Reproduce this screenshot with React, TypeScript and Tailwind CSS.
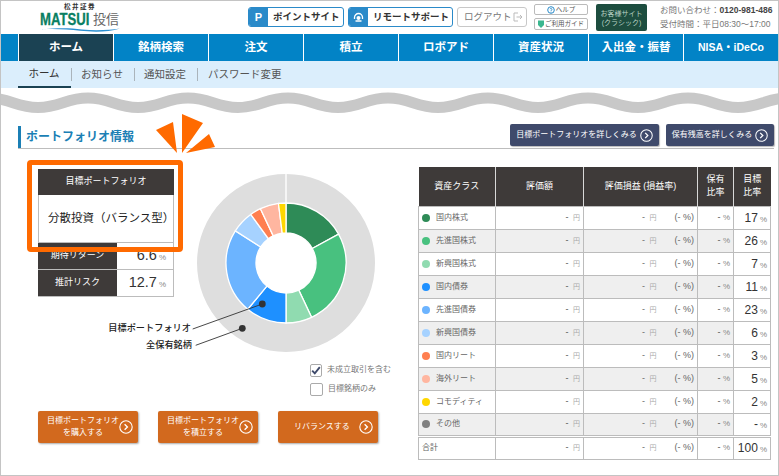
import React from "react";

const GoIcon = ({ size = 14 }: { size?: number }) => (
  <svg width={size} height={size} viewBox="0 0 14 14" className="shrink-0" fill="none" stroke="#fff">
    <circle cx="7" cy="7" r="6.2" strokeWidth="1.1" />
    <path d="M5.6 4.2 8.4 7 5.6 9.8" strokeWidth="1.4" />
  </svg>
);

const navItems = ["ホーム", "銘柄検索", "注文", "積立", "ロボアド", "資産状況", "入出金・振替", "NISA・iDeCo"];
const subItems = ["ホーム", "お知らせ", "通知設定", "パスワード変更"];

const rows = [
  ["国内株式", "#2e8b57", "17"],
  ["先進国株式", "#48c17f", "26"],
  ["新興国株式", "#90dbb0", "7"],
  ["国内債券", "#1e90ff", "11"],
  ["先進国債券", "#6cb4ff", "23"],
  ["新興国債券", "#a6d2ff", "6"],
  ["国内リート", "#ff7f50", "3"],
  ["海外リート", "#ffb6a0", "5"],
  ["コモディティ", "#ffd700", "2"],
  ["その他", "#808080", "-"],
];

const pt = (r: number, pct: number) => {
  const a = (pct / 100) * 2 * Math.PI;
  return [90 + r * Math.sin(a), 90 - r * Math.cos(a)];
};

const arc = (from: number, to: number, r1: number, r0: number) => {
  const large = to - from > 50 ? 1 : 0;
  const [a, b] = pt(r1, from);
  const [c, d] = pt(r1, to);
  const [e, f] = pt(r0, to);
  const [g, h] = pt(r0, from);
  return `M${a} ${b}A${r1} ${r1} 0 ${large} 1 ${c} ${d}L${e} ${f}A${r0} ${r0} 0 ${large} 0 ${g} ${h}Z`;
};

const wavePath = () => {
  const crest = 10;
  const trough = 19.5;
  let d = `M-13 ${crest}`;
  for (let x = -13, up = true; x < 790; x += 50, up = !up) {
    const from = up ? crest : trough;
    const to = up ? trough : crest;
    d += `C${x + 22} ${from} ${x + 28} ${to} ${x + 50} ${to}`;
  }
  return d;
};

const Chart = () => {
  let at = 0;
  const segs = rows
    .filter((r) => r[2] !== "-")
    .map((r) => {
      const from = at;
      at += Number(r[2]);
      return <path key={r[0]} d={arc(from, at, 60, 30)} fill={r[1]} stroke="#fff" strokeWidth="1.3" />;
    });
  return (
    <svg width="180" height="180" viewBox="0 0 180 180" className="overflow-visible">
      <circle cx="90" cy="90" r="74.5" fill="none" stroke="#dedede" strokeWidth="29" />
      <path d="M90 0V31" stroke="#fff" strokeWidth="1.4" />
      {segs}
      <path d="M66.3 131-3.3 156M46.3 155.3-.3 172.3" stroke="#333" strokeWidth="0.9" />
      <circle cx="66.3" cy="131" r="3.4" fill="#333" />
      <circle cx="46.3" cy="155.3" r="3.4" fill="#333" />
    </svg>
  );
};

const Yen = () => <span className="text-[7px] text-[#aaa] ml-[2px]">円</span>;
const Pct = () => <span className="text-[8px] text-[#888] ml-[2px]">%</span>;

const Values = ({ target }: { target: string }) => (
  <>
    <td className="border border-[#bcbcbc] text-right pr-[3px] text-[9px] text-[#555]">
      - <Yen />
    </td>
    <td className="border border-[#bcbcbc] text-[9px] text-[#666]">
      <div className="flex justify-between pl-[58px] pr-[3px]">
        <span>
          - <Yen />
        </span>
        <span>(- %)</span>
      </div>
    </td>
    <td className="border border-[#bcbcbc] text-right pr-[3px] text-[9px] text-[#555]">
      - <span className="text-[8px] text-[#888]">%</span>
    </td>
    <td className="border border-[#bcbcbc] text-right pr-[3px] text-[12px] text-[#333] bg-white">
      {target}
      <Pct />
    </td>
  </>
);

const Check = ({ on, label }: { on?: boolean; label: string }) => (
  <div className="flex items-center h-[14px]">
    <span className="w-[13px] h-[13px] border border-[#aaa] rounded-[2px] bg-white flex items-center justify-center">
      {on && (
        <svg width="10" height="9" viewBox="0 0 10 9" fill="none">
          <path d="M1.2 4.6 3.8 7.4 8.8 1.2" stroke="#3f4a6b" strokeWidth="1.9" />
        </svg>
      )}
    </span>
    <span className="ml-[5px] text-[8px] text-[#777]">{label}</span>
  </div>
);

export default function App() {
  return (
    <div className="w-[779px] h-[476px] box-border border border-[#c4c4c4] bg-white overflow-hidden font-['Liberation_Sans','Noto_Sans_CJK_JP',sans-serif] text-[#333]">
      {/* header */}
      <header className="h-[33px] flex">
        <div className="w-[247px] pl-[39px] pt-[2px] shrink-0">
          <div className="w-[80px] relative">
            <div className="text-[6.5px] font-bold leading-[8px] text-center tracking-[1.5px] text-[#333]">松井証券</div>
            <div className="flex items-center h-[15px] mt-[1px]">
              <span className="text-[16px] font-bold leading-[15px] text-[#0a7f62] w-[53px] origin-left scale-x-[.82] inline-block [-webkit-text-stroke:0.3px_#0a7f62]">MATSUI</span>
              <span className="text-[13px] leading-[15px] text-[#666]">投信</span>
            </div>
            <svg width="80" height="5" viewBox="0 0 80 5" className="block">
              <path d="M0 2.5C20 .5 30 1 42 2.5 56 4 70 3 80 1.5 68 5.5 52 5 40 3.8 28 2.5 14 1.5 0 2.5Z" fill="#2b8fd0" />
            </svg>
          </div>
        </div>
        <div className="flex gap-[4px] pt-[6px] h-[26px] shrink-0">
          <div className="w-[96px] h-[20px] rounded-[3px] border border-[#2a8ac9] flex items-center overflow-hidden">
            <span className="w-[19px] h-full bg-[#2a8ac9] text-white font-bold text-[11px] flex items-center justify-center">P</span>
            <span className="ml-[5px] text-[9.5px] font-bold">ポイントサイト</span>
          </div>
          <div className="w-[105px] h-[20px] rounded-[3px] border border-[#2a8ac9] flex items-center overflow-hidden">
            <span className="w-[19px] h-full bg-[#2a8ac9] flex items-center justify-center">
              <svg width="11" height="11" viewBox="0 0 11 11" fill="none" stroke="#fff" strokeWidth="1.3">
                <path d="M1.5 7V5.5a4 4 0 0 1 8 0V7" />
                <circle cx="5.5" cy="6" r="2" fill="#fff" stroke="none" />
                <path d="M2.5 9h6" />
              </svg>
            </span>
            <span className="ml-[5px] text-[9.5px] font-bold">リモートサポート</span>
          </div>
          <div className="w-[70px] h-[20px] rounded-[3px] border border-[#c8c8c8] flex items-center pl-[6px] text-[9.5px] text-[#777]">
            ログアウト
            <svg width="10" height="10" viewBox="0 0 10 10" className="ml-[1px]" fill="none" stroke="#bbb">
              <path d="M5 1H1v8h4M3.5 5H9M7 3l2 2-2 2" />
            </svg>
          </div>
        </div>
        <div className="ml-[7px] pt-[3px] flex flex-col gap-[3px] w-[54px] shrink-0">
          <div className="h-[11px] border border-[#bbb] rounded-[2px] flex items-center justify-center text-[6.5px] text-[#555]">
            <svg width="8" height="8" viewBox="0 0 8 8" className="mr-[1px]" fill="none" stroke="#2a8ac9">
              <circle cx="4" cy="4" r="3.3" />
              <path d="M3 3.2a1 1 0 1 1 1 1.2v.8M4 5.8v.8" strokeWidth=".8" />
            </svg>
            ヘルプ
          </div>
          <div className="h-[12px] border border-[#bbb] rounded-[2px] flex items-center justify-center text-[6.5px] text-[#555]">
            <svg width="6" height="8" viewBox="0 0 6 8" className="mr-[1px]">
              <path d="M0 .5h6v4.5L3 8 0 5Z" fill="#3bb78f" />
            </svg>
            ご利用ガイド
          </div>
        </div>
        <div className="ml-[8px] mt-[3px] w-[51px] h-[27px] rounded-[2px] bg-[#1d4d3f] text-[#b9d3c6] text-[7px] leading-[9px] flex flex-col items-center justify-center shrink-0">
          <span>お客様サイト</span>
          <span>(クラシック)</span>
        </div>
        <div className="ml-[13px] pt-[2px] text-[8.5px] leading-[14px] text-[#777] whitespace-nowrap">
          <div>
            お問い合わせ：<span className="font-bold text-[#444]">0120-981-486</span>
          </div>
          <div>受付時間：平日08:30～17:00</div>
        </div>
      </header>

      {/* nav */}
      <nav className="h-[27px] flex bg-[#0283c6]">
        <div className="w-[17px] shrink-0" />
        {navItems.map((n, i) => (
          <div
            key={n}
            className={`w-[95px] shrink-0 border-l border-white flex items-center justify-center text-white font-bold ${
              i === 7 ? "text-[10.5px]" : "text-[11.5px]"
            } ${i === 0 ? "bg-[#1b4253]" : ""}`}
          >
            {n}
          </div>
        ))}
      </nav>

      {/* sub nav */}
      <div className="h-[27px] bg-[#dbeefc] flex pl-[17px] text-[10.5px] text-[#555]">
        {subItems.map((s, i) => (
          <div key={s} className="flex items-center h-full">
            <span
              className={`h-full flex items-center whitespace-nowrap ${
                i === 0 ? "w-[53px] justify-center pr-[1px] border-b-2 border-[#1b4253] text-[#333]" : i === 3 ? "pl-[10px]" : "w-[62px] justify-center pr-[2px]"
              }`}
            >
              {s}
            </span>
            {i < 3 && <span className="w-px h-[13px] bg-[#aab4bb]" />}
          </div>
        ))}
      </div>

      {/* wave */}
      <div className="h-[36px]">
        <svg width="777" height="30" viewBox="0 0 777 30" className="block">
          <path d={wavePath()} fill="none" stroke="#c8c8c8" strokeWidth="11" />
        </svg>
      </div>

      {/* title */}
      <div className="h-[25px] ml-[17px] mr-[4px] border-b border-[#bdbdbd] flex items-start justify-between">
        <h2 className="h-[22px] mt-[2px] border-l-[3px] border-[#1b7fb5] pl-[5px] pt-[2px] text-[12px] leading-[18px] font-bold text-[#1b7fb5]">ポートフォリオ情報</h2>
        <div className="flex gap-[7px]">
          {[
            ["目標ポートフォリオを詳しくみる", "w-[149px]"],
            ["保有残高を詳しくみる", "w-[108px]"],
          ].map(([t, w]) => (
            <div key={t} className={`${w} h-[22px] bg-[#3f4a6b] rounded-[2px] shadow-[1px_1px_1px_#bbb] text-white text-[8px] flex items-center justify-center gap-[3px]`}>
              {t}
              <GoIcon size={13} />
            </div>
          ))}
        </div>
      </div>

      {/* body */}
      <div className="flex">
        <div className="w-[417px] shrink-0 pl-[37px] pt-[20px]">
          <div className="flex">
            <div className="w-[136px] shrink-0 relative">
              <div className="h-[26px] bg-[#3e3a39] text-white text-[9px] flex items-center justify-center">目標ポートフォリオ</div>
              <div className="h-[48px] border border-t-0 border-[#bcbcbc] flex items-center pl-[9px] text-[11.5px] text-[#222]">分散投資（バランス型）</div>
              {[
                ["期待リターン", "6.6"],
                ["推計リスク", "12.7"],
              ].map(([l, v]) => (
                <div key={l} className="flex h-[27px] border-b border-[#bcbcbc]">
                  <div className="w-[79px] bg-[#3e3a39] text-white text-[9px] flex items-center justify-center">{l}</div>
                  <div className="flex-1 border-r border-[#bcbcbc] flex items-center justify-end pr-[7px] text-[14.5px] text-[#333]">
                    {v}
                    <span className="text-[8px] text-[#888] ml-[2px] mt-[3px]">%</span>
                  </div>
                </div>
              ))}
              <div className="absolute -left-[11px] -top-[9px] w-[156px] h-[92px] border-[5px] border-[#ff6a00] rounded-[4px]" />
              <svg width="60" height="42" viewBox="118 -55 60 42" className="absolute left-[118px] -top-[55px] overflow-visible">
                <path d="M118-39 135-47 139-16ZM144-55 165-46 144-16ZM148-16 171-35 177-22Z" fill="#ff6a00" />
              </svg>
            </div>
            <div className="ml-[22px] mt-[4px] relative w-[180px] h-[180px]">
              <Chart />
              <span className="absolute right-[185px] top-[149px] text-[9.2px] font-medium leading-[12px] whitespace-nowrap text-[#222]">目標ポートフォリオ</span>
              <span className="absolute right-[184px] top-[166px] text-[9.2px] font-medium leading-[12px] whitespace-nowrap text-[#222]">全保有銘柄</span>
            </div>
          </div>
          <div className="mt-[10px] ml-[272px] flex flex-col gap-[5px] w-[80px] whitespace-nowrap">
            <Check on label="未成立取引を含む" />
            <Check label="目標銘柄のみ" />
          </div>
          <div className="mt-[15px] flex gap-[20px]">
            {[
              ["目標ポートフォリオ", "を購入する"],
              ["目標ポートフォリオ", "を積立する"],
              ["リバランスする"],
            ].map((t, i) => (
              <div key={i} className="w-[100px] h-[32px] bg-[#d2691e] rounded-[2px] shadow-[1px_1px_2px_#aaa] text-white text-[8px] leading-[12px] flex items-center pl-[8px] pr-[5px]">
                <div className={`text-center ${i === 2 ? "w-[71px] pl-[8px] text-left" : "w-[75px] whitespace-nowrap"}`}>
                  {t.map((x) => (
                    <div key={x}>{x}</div>
                  ))}
                </div>
                <span className={i === 2 ? "ml-[3px]" : "-ml-[1px]"}>
                  <GoIcon size={14} />
                </span>
              </div>
            ))}
          </div>
        </div>

        <div className="pt-[18px]">
          <table className="w-[352px] table-fixed border-collapse">
            <colgroup>
              <col className="w-[77px]" />
              <col className="w-[88px]" />
              <col className="w-[114px]" />
              <col className="w-[36px]" />
              <col className="w-[37px]" />
            </colgroup>
            <thead>
              <tr className="h-[39px] bg-[#3e3a39] text-white text-[9px] leading-[13px]">
                <th className="font-normal border-r border-[#d8d8d8]">資産クラス</th>
                <th className="font-normal border-r border-[#d8d8d8]">評価額</th>
                <th className="font-normal border-r border-[#d8d8d8]">評価損益 (損益率)</th>
                <th className="font-normal border-r border-[#d8d8d8]">
                  保有
                  <br />
                  比率
                </th>
                <th className="font-normal">
                  目標
                  <br />
                  比率
                </th>
              </tr>
            </thead>
            <tbody>
              {rows.map((r, i) => (
                <tr key={r[0]} className={`h-[23px] ${i % 2 ? "bg-[#efefef]" : "bg-white"}`}>
                  <td className="border border-[#bcbcbc]">
                    <div className="flex items-center pl-[3px] text-[8px] text-[#666] whitespace-nowrap">
                      <span className="w-[8px] h-[8px] rounded-full mr-[6px] shrink-0" style={{ backgroundColor: r[1] }} />
                      {r[0]}
                    </div>
                  </td>
                  <Values target={r[2]} />
                </tr>
              ))}
            </tbody>
            <tfoot>
              <tr className="h-[23px] [&>td]:border-t-[3px] [&>td]:[border-top-style:double]">
                <td className="border border-[#bcbcbc] pl-[3px] text-[8px] text-[#666]">合計</td>
                <Values target="100" />
              </tr>
            </tfoot>
          </table>
        </div>
      </div>
    </div>
  );
}
